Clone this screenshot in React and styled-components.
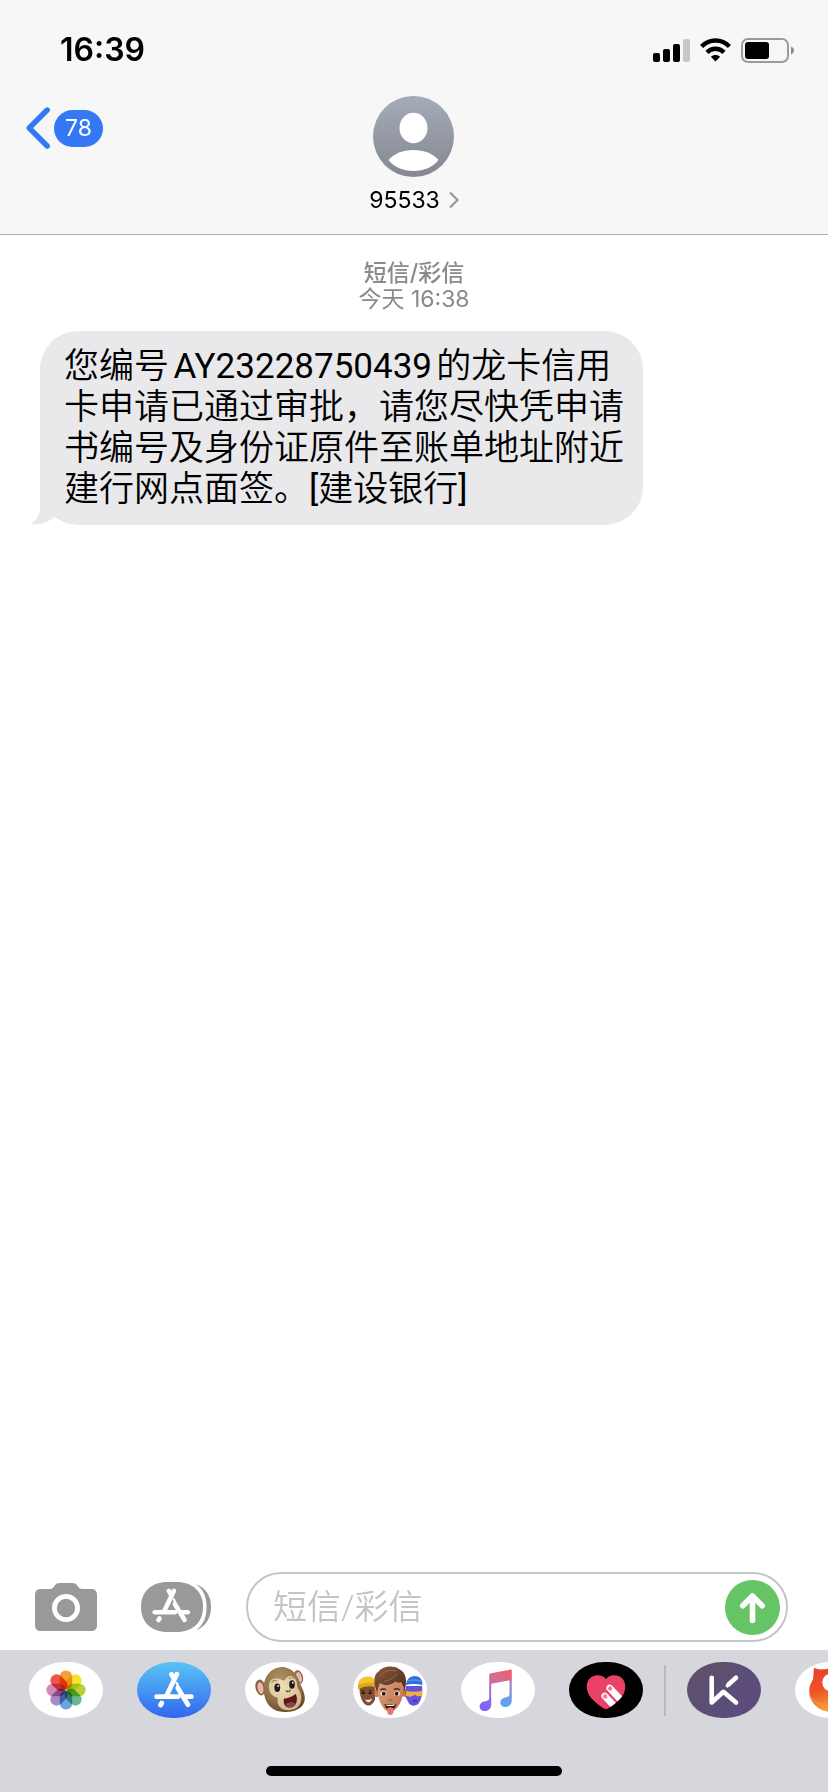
import styled, { createGlobalStyle } from 'styled-components';

const GlobalStyle = createGlobalStyle`
  * {
    box-sizing: border-box;
  }

  body {
    margin: 0;
    background-color: #ffffff;
    color: #000000;
    font-family: Inter, 'Noto Sans CJK SC', sans-serif;
  }

  button {
    padding: 0;
    border: none;
    background: none;
    color: inherit;
    font: inherit;
    cursor: pointer;
  }

  svg {
    display: block;
  }
`;

const Screen = styled.div`
  min-height: 100vh;
  display: flex;
  flex-direction: column;
  overflow: hidden;
`;

const Header = styled.header`
  background-color: #f7f7f7;
  border-bottom: 1px solid #b2b2b4;
`;

const StatusBar = styled.div`
  display: flex;
  align-items: center;
  justify-content: space-between;
  height: 96px;
  padding: 4px 34px 0 60px;
`;

const Clock = styled.time`
  font-size: 32px;
  line-height: 40px;
  font-weight: 600;
`;

const StatusIcons = styled.div`
  display: flex;
  align-items: center;
  gap: 10px;
`;

const NavBar = styled.nav`
  display: grid;
  grid-template-columns: 1fr auto 1fr;
  align-items: start;
  padding: 0 26px 19px;
`;

const BackLink = styled.a`
  display: flex;
  align-items: center;
  justify-self: start;
  gap: 4px;
  padding-top: 11px;
  text-decoration: none;
`;

const UnreadBadge = styled.span`
  min-width: 49px;
  padding: 0 10px;
  border-radius: 19px;
  background-color: #3478f6;
  color: #ffffff;
  font-size: 23px;
  line-height: 37px;
  text-align: center;
`;

const Contact = styled.button`
  display: flex;
  flex-direction: column;
  align-items: center;
  gap: 8px;
`;

const ContactName = styled.span`
  display: flex;
  align-items: center;
  gap: 9px;
  font-size: 23px;
  line-height: 30px;
`;

const Messages = styled.main`
  flex: 1;
  padding: 25px 40px;
`;

const Stamp = styled.div`
  margin-bottom: 19px;
  color: #8a8a8e;
  font-size: 23px;
  line-height: 26px;
  text-align: center;
`;

const StampKind = styled.div`
  font-weight: 500;
`;

const StampTime = styled.div`
  font-weight: 400;
`;

const Bubble = styled.div`
  position: relative;
  width: fit-content;
  max-width: 603px;
  padding: 15px 14px 15px 24px;
  border-radius: 38px;
  background-color: #e9e9eb;
  font-family: Roboto, 'Noto Sans CJK SC DemiLight', 'Noto Sans CJK SC', sans-serif;
  font-size: 35px;
  line-height: 41px;
  text-autospace: normal;
`;

const BubbleTail = styled.svg`
  position: absolute;
  left: -10px;
  bottom: 0;
`;

const Composer = styled.form`
  display: flex;
  align-items: center;
  padding: 0 40px 8px 35px;
`;

const ToolButton = styled.button`
  margin-right: ${({ $gap }) => $gap}px;
`;

const Field = styled.div`
  flex: 1;
  display: flex;
  align-items: center;
  height: 70px;
  padding: 0 6px 0 25px;
  border: 2px solid #c5c5c7;
  border-radius: 35px;
`;

const TextInput = styled.input`
  flex: 1;
  min-width: 0;
  padding: 0;
  border: none;
  outline: none;
  background: none;
  font-family: Roboto, 'Noto Sans CJK SC DemiLight', 'Noto Sans CJK SC', sans-serif;
  font-size: 34px;
  font-weight: 350;
  line-height: 48px;

  &::placeholder {
    color: #c4c4c6;
    opacity: 1;
  }
`;

const Dock = styled.footer`
  padding-bottom: 16px;
  background-color: #d6d7dc;
`;

const AppStrip = styled.div`
  display: flex;
  align-items: center;
  gap: 34px;
  padding: 12px 0 48px 29px;
  overflow: hidden;
`;

const AppButton = styled.button`
  flex: none;
  width: 74px;
  height: 56px;
  border-radius: 35px / 28px;
  background: ${({ $fill }) => $fill || '#ffffff'};
  overflow: hidden;
`;

const Divider = styled.span`
  flex: none;
  width: 2px;
  height: 51px;
  margin: 0 -13px;
  background-color: #b9babf;
`;

const HomeIndicator = styled.div`
  width: 296px;
  height: 10px;
  margin: 0 auto;
  border-radius: 5px;
  background-color: #000000;
`;

const SignalIcon = () => (
  <svg width='37' height='23' viewBox='0 0 37 23' aria-hidden='true'>
    <rect x='0' y='14' width='7' height='9' rx='2' />
    <rect x='10' y='10' width='7' height='13' rx='2' />
    <rect x='20' y='5' width='7' height='18' rx='2' />
    <rect x='30' y='0' width='7' height='23' rx='2' fill='#c6c6c6' />
  </svg>
);

const WifiIcon = () => (
  <svg width='31' height='24' viewBox='0 0 31 24' aria-hidden='true'>
    <g fill='none' stroke='#000000' strokeWidth='4.4'>
      <path d='M1.6 8.6 C9.3 0.5 21.7 0.5 29.4 8.6' />
      <path d='M7 14.4 C11.8 9.6 19.2 9.6 24 14.4' />
    </g>
    <path d='M10.9 18.8 C13.5 16.3 17.5 16.3 20.1 18.8 L15.5 23.4 Z' />
  </svg>
);

const BatteryIcon = () => (
  <svg width='53' height='25' viewBox='0 0 53 25' aria-hidden='true'>
    <rect x='1' y='1' width='46' height='23' rx='6' fill='none' stroke='#9b9b9b' strokeWidth='2' />
    <rect x='4' y='4' width='24' height='17' rx='3' />
    <path d='M50 8.5 C52 9.3 53 10.7 53 12.5 C53 14.3 52 15.7 50 16.5 Z' fill='#8e8e8e' />
  </svg>
);

const BackIcon = () => (
  <svg width='24' height='42' viewBox='0 0 24 42' fill='none' aria-hidden='true'>
    <path d='M21.2 3 L3.2 21 L21.2 39' stroke='#3478f6' strokeWidth='5.4' strokeLinecap='round' strokeLinejoin='round' />
  </svg>
);

const Avatar = () => (
  <svg width='81' height='81' viewBox='0 0 81 81' aria-hidden='true'>
    <defs>
      <linearGradient id='avatar' x1='0' y1='0' x2='0' y2='1'>
        <stop offset='0' stopColor='#a5abb9' />
        <stop offset='1' stopColor='#848891' />
      </linearGradient>
    </defs>
    <circle cx='40.5' cy='40.5' r='40.5' fill='url(#avatar)' />
    <ellipse cx='40.5' cy='32' rx='14' ry='15.2' fill='#ffffff' />
    <path d='M15.5 64 C21 57.5 30 54 40.5 54 C51 54 60 57.5 65.5 64 C60 71 51 75 40.5 75 C30 75 21 71 15.5 64 Z' fill='#ffffff' />
  </svg>
);

const DetailIcon = () => (
  <svg width='10' height='18' viewBox='0 0 10 18' fill='none' aria-hidden='true'>
    <path d='M1 1.5 L8.5 9 L1 16.5' stroke='#8e929c' strokeWidth='2' />
  </svg>
);

const CameraIcon = () => (
  <svg width='62' height='48' viewBox='0 0 62 48' aria-hidden='true'>
    <path
      d='M6 6 H15 C17 6 18 5 19 3.5 C20.5 1 22 0 25 0 H37 C40 0 41.5 1 43 3.5 C44 5 45 6 47 6 H56 C60 6 62 8 62 12 V42 C62 46 60 48 56 48 H6 C2 48 0 46 0 42 V12 C0 8 2 6 6 6 Z'
      fill='#999999'
    />
    <circle cx='31' cy='25' r='11.6' fill='none' stroke='#ffffff' strokeWidth='4.8' />
  </svg>
);

// shared by the grey drawer button and the blue dock pill
const StoreGlyph = () => (
  <g fill='none' stroke='#ffffff' strokeWidth='4.8' strokeLinecap='round'>
    <path d='M39.8 12.2 L29.4 34' />
    <path d='M34.4 12.2 L37.2 17' />
    <path d='M19.6 34.7 H41' />
    <path d='M48.5 34.7 H54.4' />
    <path d='M40.8 26 L51 42.8' />
    <path d='M39.7 21 L42.5 28' strokeWidth='2.4' />
    <path d='M24.6 41.2 L23.6 42.8' strokeWidth='5' />
  </g>
);

const DrawerIcon = () => (
  <svg width='70' height='50' viewBox='0 0 70 50' aria-hidden='true'>
    <path d='M27 0 H35 C52 0 62 10 62 25 C62 40 52 50 35 50 H27 C10 50 0 40 0 25 C0 10 10 0 27 0 Z' fill='#999999' />
    <path d='M55 2 C65 6 70 14 70 25 C70 36 65 44 55 48.5 C62.5 43 65.6 35 65.6 25 C65.6 15 62.5 7.5 55 2 Z' fill='#999999' />
    <g transform='translate(-4.9 -2.7) scale(0.95)'>
      <StoreGlyph />
    </g>
  </svg>
);

const SendIcon = () => (
  <svg width='55' height='55' viewBox='0 0 55 55' aria-hidden='true'>
    <circle cx='27.5' cy='27.5' r='27.5' fill='#65c466' />
    <path d='M27.5 40.5 V16 M17.8 25.8 L27.5 16 L37.2 25.8' fill='none' stroke='#ffffff' strokeWidth='5.6' strokeLinecap='round' strokeLinejoin='round' />
  </svg>
);

const petals = ['#f4a02f', '#f3e52a', '#b4d33a', '#6bb98e', '#68a5dc', '#a58ac6', '#d389b4', '#ee564a'];

const PhotosArt = () => (
  <g transform='translate(37 28)'>
    {petals.map((color, i) => (
      <rect key={color} x='-6.2' y='-19.6' width='12.4' height='19' rx='6.2' fill={color} transform={`rotate(${i * 45})`} style={{ mixBlendMode: 'multiply' }} />
    ))}
  </g>
);

const MonkeyArt = () => (
  <g>
    <defs>
      <radialGradient id='fur' cx='0.4' cy='0.25' r='0.8'>
        <stop offset='0' stopColor='#ac8e60' />
        <stop offset='0.65' stopColor='#8d6e45' />
        <stop offset='1' stopColor='#65482a' />
      </radialGradient>
      <radialGradient id='muzzle' cx='0.4' cy='0.3' r='0.8'>
        <stop offset='0' stopColor='#efdfba' />
        <stop offset='1' stopColor='#cfb588' />
      </radialGradient>
    </defs>
    <ellipse cx='15.5' cy='25.5' rx='5' ry='8' fill='#856746' transform='rotate(-12 15.5 25.5)' />
    <ellipse cx='15.6' cy='26' rx='3' ry='5.8' fill='#efb3b0' transform='rotate(-12 15.6 26)' />
    <ellipse cx='53.6' cy='15' rx='4.4' ry='7' fill='#856746' transform='rotate(-16 53.6 15)' />
    <ellipse cx='54' cy='15.2' rx='2.6' ry='5.2' fill='#efb3b0' transform='rotate(-16 54 15.2)' />
    <path d='M36 5 C45 4.5 52 11 54.5 20 C57 26 60 31 59.8 37 C59.5 46 49 50.5 39 50 C28 49.7 21.5 43 19.5 34 C16 19 23 6.5 36 5 Z' fill='url(#fur)' />
    <path d='M24 26 C23.2 19 27.5 16 31.5 16.3 C35.5 16.6 37.5 18.6 39.5 18.6 C41 15.6 43.5 13.4 47 14.2 C51 15.4 52.4 21 52.4 25.5 C55.6 29.5 57 34 56 39 C54.5 46 48 48.8 41 48 C34.5 47 31.5 42 32.8 35.8 C27.5 34.5 24.6 31.5 24 26 Z' fill='url(#muzzle)' />
    <path d='M26.5 20.5 Q28.5 17.8 32 18.6 M44 17 Q46.5 14.4 49.5 16.4' fill='none' stroke='#a98b5b' strokeWidth='1.1' />
    <ellipse cx='32.3' cy='25.7' rx='2.9' ry='4.2' fill='#201c1b' />
    <ellipse cx='47' cy='22.5' rx='2.8' ry='4.2' fill='#201c1b' />
    <circle cx='33.2' cy='23.9' r='0.9' fill='#ffffff' />
    <circle cx='47.8' cy='20.7' r='0.9' fill='#ffffff' />
    <path d='M41.3 28.8 L42.8 29.7 M45 28.2 L44.2 29.4' stroke='#6c4b37' strokeWidth='1.4' strokeLinecap='round' />
    <path d='M39 36.5 C42.5 36.3 47 35 50.5 32 C52.2 34 52.6 39 50.5 42.5 C48 46.3 42 46.5 40 43.5 C38.6 41.3 38.3 38.5 39 36.5 Z' fill='#5b171b' />
    <path d='M40.5 42.8 C43 39.5 47.5 39 50.5 41.8 C48 46 42.4 46 40.5 42.8 Z' fill='#8a4547' />
  </g>
);

const MemojiArt = () => (
  <g>
    <defs>
      <linearGradient id='skin' x1='0' y1='0' x2='1' y2='1'>
        <stop offset='0' stopColor='#dfa17a' />
        <stop offset='1' stopColor='#b86f4b' />
      </linearGradient>
      <linearGradient id='hair' x1='0' y1='0' x2='1' y2='1'>
        <stop offset='0' stopColor='#8b5a3d' />
        <stop offset='1' stopColor='#4a2b1c' />
      </linearGradient>
    </defs>
    {/* yellow cap */}
    <path d='M6.5 24 H22 V38 C20 41.5 18 44 14.5 43.5 C9.5 42.5 6 34 6.5 24 Z' fill='#825033' />
    <path d='M5 25.5 C4.3 18.5 8.5 14.5 15 14.5 C19 14.5 22 16.5 22 20 V24.5 C16 23 10 24 5.5 27 Z' fill='#f2c62c' />
    <path d='M5 23.5 C10 21 16 20.3 22 21.3 V25 C16 23.6 10 24.5 5.2 27.5 Z' fill='#dba91b' />
    <path d='M8.3 29 L11.4 28.2 M15.8 28.2 L19 28.8' stroke='#3e2418' strokeWidth='1.1' />
    <ellipse cx='10.4' cy='31' rx='1.5' ry='1.2' fill='#21140e' />
    <ellipse cx='17.2' cy='31' rx='1.5' ry='1.2' fill='#21140e' />
    <path d='M12 37.2 Q15.5 39 19 36.5 Q18 40.3 15 40.2 Q12.8 40 12 37.2 Z' fill='#f1e6df' />
    {/* blue hat */}
    <path d='M53 24 H69 C70 33 67.5 40 64.5 42.5 C61.5 44.5 58 43.7 56 41.5 L52 34 Z' fill='#6650dc' />
    <path d='M53 25 C53 17.5 56.5 14 62 14 C67 14 69.8 18 69.4 23 C64 21.6 58 21.5 53 23 Z' fill='#2b6fdd' />
    <path d='M54.5 19 C59 17.7 64 17.8 69 19.3' fill='none' stroke='#4b93f3' strokeWidth='1.5' />
    <path d='M52.5 28.7 C58 30 64 29.9 69.8 28.7 L69.3 33.3 C66.5 35 63.5 34.5 61.8 32.5 C60 35 55.5 35.3 52.5 33.5 Z' fill='#f1af43' />
    <path d='M59 38.5 Q62 37 65 38.5 Q62 41 59 38.5 Z' fill='#4534ad' />
    {/* centre face */}
    <ellipse cx='23.8' cy='31' rx='2.5' ry='4.2' fill='#c77e56' />
    <ellipse cx='51' cy='30.5' rx='2.5' ry='4.2' fill='#b96f49' />
    <path d='M25 19 H50 C51 31 49.4 38 46 43 C43 47.5 40 50 37 50 C33.5 50 30 46 27.5 41 C25 36 24.2 27 25 19 Z' fill='url(#skin)' />
    <path d='M24 30 C20.4 22 20 13 25.5 9.5 C30 4 40 3 46 7 C53 10 55 19 51.2 29.5 C51 26 50 23 48 20 C46 21 44 20.6 42.5 19.6 C38 23.5 32 24.2 26.8 21 C25.6 24 25 27 24 30 Z' fill='url(#hair)' />
    <path d='M27 14.5 C31 9 37 7 43 9 M31 19.5 C37 18.5 41 15 44 12.5' fill='none' stroke='#a06c4b' strokeWidth='0.9' />
    <path d='M27.3 27.8 Q29.8 26.2 33 27.5 M41 27.5 Q44 26.1 46.8 27.8' fill='none' stroke='#4e2c1c' strokeWidth='1.5' />
    <ellipse cx='30.4' cy='31.8' rx='2.9' ry='2.2' fill='#ffffff' />
    <ellipse cx='43.9' cy='31.8' rx='2.9' ry='2.2' fill='#ffffff' />
    <circle cx='30.7' cy='31.8' r='2' fill='#2d1a13' />
    <circle cx='43.6' cy='31.8' r='2' fill='#2d1a13' />
    <path d='M35.3 37.4 Q37.3 38.7 39.3 37.4' fill='none' stroke='#a15c3b' strokeWidth='1.2' />
    <path d='M31.6 42 C35 43 40 43 43 41.8 C42.6 45.3 40.3 48 37.3 48 C34.3 48 32 45.3 31.6 42 Z' fill='#2f0d0e' />
    <path d='M32.6 42.4 Q37.3 43.6 42 42.3 L41.6 43.5 Q37.3 44.6 33 43.5 Z' fill='#ffffff' />
    <path d='M34.2 46 Q37.3 44.4 40.4 46 V49.4 C40.4 51.6 39 53 37.3 53 C35.6 53 34.2 51.6 34.2 49.4 Z' fill='#e9716f' />
  </g>
);

const MusicArt = () => (
  <g>
    <defs>
      <linearGradient id='note' gradientUnits='userSpaceOnUse' x1='44' y1='8' x2='30' y2='49'>
        <stop offset='0' stopColor='#ef5f6c' />
        <stop offset='0.3' stopColor='#cf6d9b' />
        <stop offset='0.6' stopColor='#9c6ddd' />
        <stop offset='1' stopColor='#8162f8' />
      </linearGradient>
      <linearGradient id='noteBlue' x1='0' y1='0' x2='0' y2='1'>
        <stop offset='0' stopColor='#c874a9' />
        <stop offset='0.5' stopColor='#8494e3' />
        <stop offset='1' stopColor='#55a8f4' />
      </linearGradient>
    </defs>
    <path d='M48.5 17 H50.8 V38.5 C50.8 42.5 48 45 44.3 45 C41.2 45 39.3 43.2 39.3 40.5 C39.3 37.5 41.5 35.8 45 35.2 C47.5 34.8 48.5 34.3 48.5 31.5 Z' fill='url(#noteBlue)' />
    <path d='M28.2 13.2 C28.2 12 28.7 11.4 29.9 11.2 L49.2 7.6 C50.3 7.4 50.8 7.8 50.8 8.9 V18 L30.2 21.7 V42.5 C30.2 46.5 27.5 49 23.7 49 C20.5 49 18.6 47.1 18.6 44.5 C18.6 41.5 21 39.7 24.3 39.2 C27 38.8 28.2 38.3 28.2 35.5 Z' fill='url(#note)' />
  </g>
);

const Finger = ({ x, y }) => (
  <g transform={`translate(${x} ${y}) rotate(-43)`}>
    <rect x='-3.4' y='-3.4' width='6.8' height='24' rx='3.4' fill='#ffffff' />
    <path d='M0 3.4 C-2.7 1.7 -2.5 -1.4 -0.8 -1.5 Q0 -1.5 0 -0.8 Q0 -1.5 0.8 -1.5 C2.5 -1.4 2.7 1.7 0 3.4 Z' fill='#f07a97' />
  </g>
);

const HeartArt = () => (
  <g>
    <clipPath id='heart'>
      <path d='M37 17.2 C40 13 46 12.5 50.5 14.5 C55.5 17 57.5 23 55.5 29.5 C53.5 36 46.5 41.5 40 46 C38 47.5 36 47.5 34 46 C27.5 41.5 20.5 36 18.5 29.5 C16.5 23 18.5 17 23.5 14.5 C28 12.5 34 13 37 17.2 Z' />
    </clipPath>
    <g clipPath='url(#heart)'>
      <rect width='74' height='56' fill='#ea4168' />
      <Finger x={40.7} y={26} />
      <Finger x={35.8} y={34} />
    </g>
  </g>
);

const KeepArt = () => (
  <g fill='none' stroke='#ffffff' strokeWidth='4.6' strokeLinecap='round' strokeLinejoin='round'>
    <path d='M24.7 15.8 V40.5 L36.4 29.8 L49 40.5' />
    <path d='M49 15.8 L41.5 22.5' />
    <path d='M41.3 21 L38.2 23.8 L40.2 26 L43.3 23.4 Z' fill='#ffffff' stroke='none' />
  </g>
);

const FoxArt = () => (
  <g>
    <defs>
      <linearGradient id='fox' x1='0' y1='0' x2='0.3' y2='1'>
        <stop offset='0' stopColor='#ea3b2e' />
        <stop offset='0.55' stopColor='#ef5527' />
        <stop offset='1' stopColor='#f9a33a' />
      </linearGradient>
    </defs>
    <path d='M19 5.8 C23 8.2 28 7.5 34 6.5 H60 V50 H36 C23 49.5 14.2 40 14.2 28.5 C14.2 24.5 15.8 21 18 17.5 C18.6 14 18.5 9.5 19 5.8 Z' fill='url(#fox)' />
    <circle cx='36' cy='20.5' r='8.7' fill='#ffffff' />
    <path d='M16 36 C21 42 27 43.5 34 42' fill='none' stroke='#f98c3d' strokeWidth='1.6' />
  </g>
);

const dockApps = [
  { id: 1, title: '照片', Art: PhotosArt },
  { id: 2, title: 'App Store', Art: StoreGlyph, fill: 'linear-gradient(#5ac4f5, #3166ee)' },
  { id: 3, title: '拟我表情', Art: MonkeyArt },
  { id: 4, title: '拟我表情贴纸', Art: MemojiArt },
  { id: 5, title: '音乐', Art: MusicArt },
  { id: 6, title: 'Digital Touch', Art: HeartArt, fill: '#000000' },
];

const moreApps = [
  { id: 7, title: 'Keep', Art: KeepArt, fill: 'linear-gradient(135deg, #5e5167, #5b4a84)' },
  { id: 8, title: 'UC', Art: FoxArt },
];

const DockApp = ({ title, fill, Art }) => (
  <AppButton type='button' aria-label={title} $fill={fill}>
    <svg width='74' height='56' viewBox='0 0 74 56' aria-hidden='true'>
      <Art />
    </svg>
  </AppButton>
);

const App = () => (
  <Screen>
    <GlobalStyle />
    <Header>
      <StatusBar>
        <Clock>16:39</Clock>
        <StatusIcons>
          <SignalIcon />
          <WifiIcon />
          <BatteryIcon />
        </StatusIcons>
      </StatusBar>
      <NavBar>
        <BackLink href='#messages'>
          <BackIcon />
          <UnreadBadge>78</UnreadBadge>
        </BackLink>
        <Contact type='button'>
          <Avatar />
          <ContactName>
            95533
            <DetailIcon />
          </ContactName>
        </Contact>
      </NavBar>
    </Header>

    <Messages id='messages'>
      <Stamp>
        <StampKind>短信/彩信</StampKind>
        <StampTime>今天 16:38</StampTime>
      </Stamp>
      <Bubble>
        您编号AY23228750439的龙卡信用卡申请已通过审批，请您尽快凭申请书编号及身份证原件至账单地址附近建行网点面签。[建设银行]
        <BubbleTail width='36' height='40' viewBox='0 0 36 40' aria-hidden='true'>
          <path d='M10 0 V22 C10 30 6.5 36 0 39 C8.5 40.5 17 38 23.5 32.5 L30 20 Z' fill='#e9e9eb' />
        </BubbleTail>
      </Bubble>
    </Messages>

    <Composer onSubmit={(e) => e.preventDefault()}>
      <ToolButton type='button' aria-label='相机' $gap={44}>
        <CameraIcon />
      </ToolButton>
      <ToolButton type='button' aria-label='App 抽屉' $gap={35}>
        <DrawerIcon />
      </ToolButton>
      <Field>
        <TextInput type='text' aria-label='短信/彩信' placeholder='短信/彩信' />
        <button type='submit' aria-label='发送'>
          <SendIcon />
        </button>
      </Field>
    </Composer>

    <Dock>
      <AppStrip>
        {dockApps.map(({ id, ...appProps }) => (
          <DockApp key={id} {...appProps} />
        ))}
        <Divider />
        {moreApps.map(({ id, ...appProps }) => (
          <DockApp key={id} {...appProps} />
        ))}
      </AppStrip>
      <HomeIndicator />
    </Dock>
  </Screen>
);

export default App;
